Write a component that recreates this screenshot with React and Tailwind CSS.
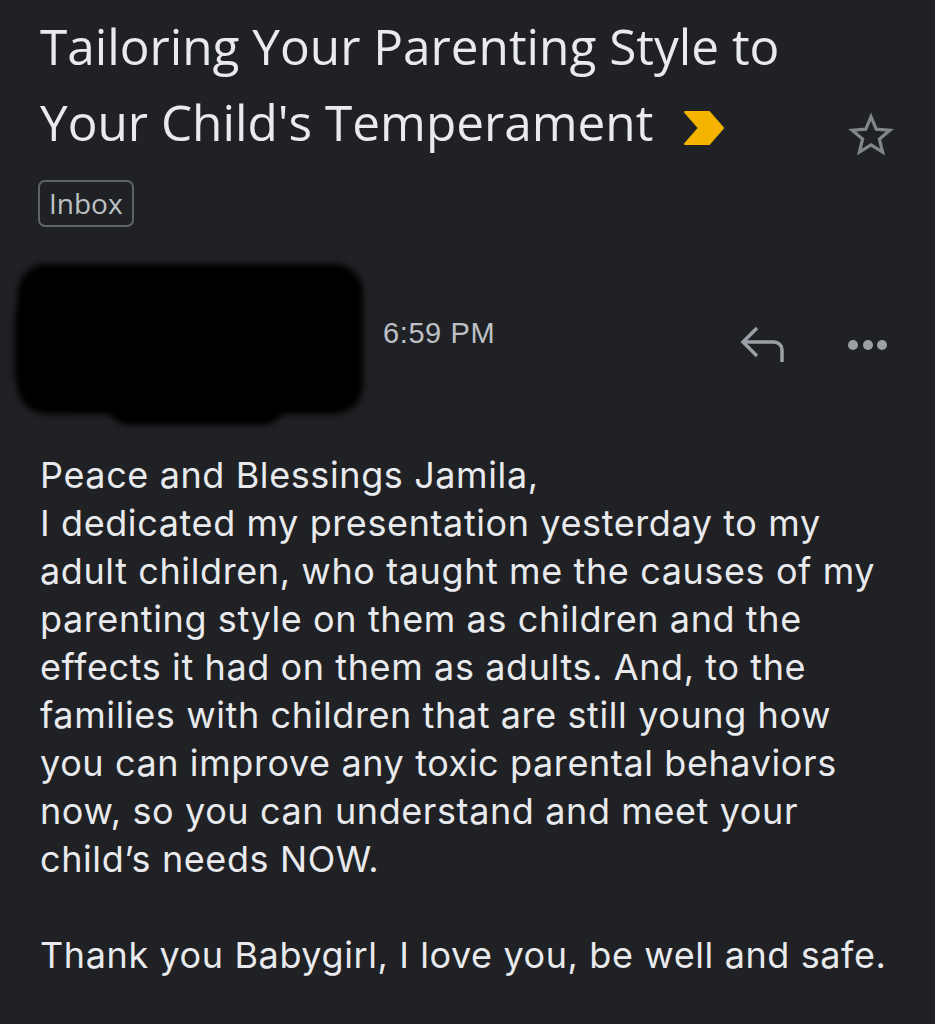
import React from 'react'

const bodyLines = [
  'Peace and Blessings Jamila,',
  'I dedicated my presentation yesterday to my',
  'adult children, who taught me the causes of my',
  'parenting style on them as children and the',
  'effects it had on them as adults. And, to the',
  'families with children that are still young how',
  'you can improve any toxic parental behaviors',
  'now, so you can understand and meet your',
  'child\u2019s needs NOW.',
]

function Star(){
  return (
    <svg width="48" height="48" viewBox="0 0 24 24" fill="none" stroke="#80868b" strokeWidth="1.6" strokeLinejoin="miter">
      <path d="M12 2.8l2.6 6.3 6.8.5-5.2 4.4 1.6 6.6L12 17l-5.8 3.6 1.6-6.6-5.2-4.4 6.8-.5z" />
    </svg>
  )
}

function Chevron(){
  return (
    <svg width="42" height="34" viewBox="0 0 42 34">
      <path d="M2 1h24l14 16-14 16H2l14-16z" fill="#f4b400" strokeLinejoin="round" stroke="#f4b400" strokeWidth="2" />
    </svg>
  )
}

function Reply(){
  return (
    <svg width="48" height="36" viewBox="0 0 48 36" fill="none" stroke="#9aa0a6" strokeWidth="3.5">
      <path d="M19 2L5 16l14 14" strokeLinejoin="miter" />
      <path d="M5 16h31a8 8 0 0 1 8 8v12" />
    </svg>
  )
}

export default function App(){
  return (
    <div className="min-h-screen w-[935px] h-[1024px] overflow-hidden bg-[#202124] text-[#e8eaed]">
      <div className="pl-10 pr-[40px] pt-[8px]">
        <div className="flex items-start justify-between">
          <h1 className="text-[49.5px] leading-[76px] font-normal font-['Open_Sans',sans-serif] text-[#e8eaed]">
            Tailoring Your Parenting Style to<br />
            Your Child's Temperament
            <span className="inline-block align-middle ml-[30px]"><Chevron /></span>
          </h1>
          <div className="mt-[103px]"><Star /></div>
        </div>

        <div className="mt-[20px]">
          <span className="inline-block border-2 border-[#5f6368] rounded-[7px] -ml-[2px] px-[9px] py-[2px] text-[28px] leading-[39px] text-[#bdc1c6] font-['Open_Sans',sans-serif]">Inbox</span>
        </div>

        <div className="mt-[33px] flex items-start">
          <div className="relative -ml-6 w-[350px] h-[165px]">
            <div className="absolute left-[2px] top-[4px] w-[345px] h-[150px] bg-black rounded-[28px] blur-[3px]" />
            <div className="absolute left-[90px] top-[100px] w-[180px] h-[65px] bg-black rounded-[24px] blur-[3px]" />
            <div className="absolute left-[0px] top-[30px] w-[80px] h-[110px] bg-black rounded-[30px] blur-[4px]" />
          </div>
          <div className="ml-[17px] mt-[56px] text-[29px] leading-[34px] tracking-[0.6px] text-[#bdc1c6] font-['Liberation_Sans',sans-serif]">6:59 PM</div>
          <div className="ml-auto flex items-start">
            <div className="mt-[66px]"><Reply /></div>
            <div className="ml-[62px] mt-[80px] mr-[8px] flex gap-[4.5px]">
              <span className="w-[10px] h-[10px] rounded-full bg-[#9aa0a6]" />
              <span className="w-[10px] h-[10px] rounded-full bg-[#9aa0a6]" />
              <span className="w-[10px] h-[10px] rounded-full bg-[#9aa0a6]" />
            </div>
          </div>
        </div>

        <div className="mt-[26px] text-[36px] leading-[48px] tracking-[0.6px] text-[#e8eaed] font-['Inter',sans-serif]">
          {bodyLines.map((l, i) => <div key={i}>{l}</div>)}
          <div className="h-[48px]" />
          <div>Thank you Babygirl, I love you, be well and safe.</div>
        </div>
      </div>
    </div>
  )
}
